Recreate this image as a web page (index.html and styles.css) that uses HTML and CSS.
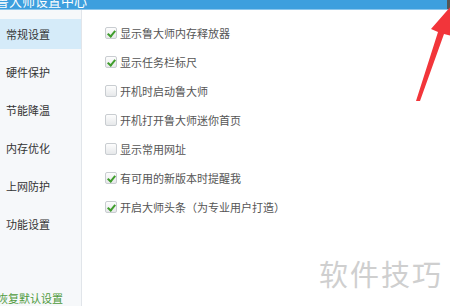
FILE: index.html
```html
<!DOCTYPE html>
<html lang="zh-CN">
<head>
  <meta charset="UTF-8" />
  <title>鲁大师设置中心</title>
  <link rel="stylesheet" href="styles.css">
</head>
<body>
  <div class="window">
    <div class="title-bar">
      <span class="title">鲁大师设置中心</span>
      <span class="close-edge"></span>
    </div>
    <div class="main">
      <div class="sidebar">
        <ul class="nav">
          <li class="active">常规设置</li>
          <li>硬件保护</li>
          <li>节能降温</li>
          <li>内存优化</li>
          <li>上网防护</li>
          <li>功能设置</li>
        </ul>
        <a class="reset">恢复默认设置</a>
      </div>
      <div class="content">
        <label class="option"><span class="box checked"></span>显示鲁大师内存释放器</label>
        <label class="option"><span class="box checked"></span>显示任务栏标尺</label>
        <label class="option"><span class="box"></span>开机时启动鲁大师</label>
        <label class="option"><span class="box"></span>开机打开鲁大师迷你首页</label>
        <label class="option"><span class="box"></span>显示常用网址</label>
        <label class="option"><span class="box checked"></span>有可用的新版本时提醒我</label>
        <label class="option"><span class="box checked"></span>开启大师头条（为专业用户打造）</label>
        <div class="watermark">软件技巧</div>
      </div>
    </div>
    <svg class="arrow" width="450" height="306" viewBox="0 0 450 306">
      <polygon points="416,101 420,101 444,34 452,36 451,6 431,29 438,32" fill="#f2353a"/>
    </svg>
  </div>
</body>
</html>
```

FILE: styles.css
```css
* {
  box-sizing: border-box;
}

body {
  margin: 0;
  font-family: "Noto Sans CJK SC", "Noto Sans", sans-serif;
  background: #fff;
  overflow: hidden;
}

.window {
  width: 450px;
  height: 306px;
  display: flex;
  flex-direction: column;
  position: relative;
  overflow: hidden;
}

.title-bar {
  height: 10px;
  background: #3d9fde;
  border-bottom: 1px solid #8cc6ec;
  overflow: hidden;
  display: flex;
  justify-content: space-between;
}

.title {
  color: #fff;
  font-size: 13px;
  line-height: 13px;
  margin-top: -6px;
  margin-left: -4px;
}

.close-edge {
  width: 3px;
  height: 10px;
  background: #555;
}

.main {
  flex: 1;
  display: flex;
}

.sidebar {
  width: 82px;
  background: #f6f8fa;
  border-right: 1px solid #e1e5ea;
  display: flex;
  flex-direction: column;
  justify-content: space-between;
}

.nav {
  list-style: none;
  margin: 0;
  padding: 9px 0 0;
  display: flex;
  flex-direction: column;
  gap: 8px;
}

.nav li {
  height: 30px;
  line-height: 30px;
  padding-left: 6px;
  font-size: 11px;
  color: #333;
}

.nav li.active {
  background: #d5ebf9;
}

.reset {
  font-size: 11px;
  color: #4f9a3c;
  margin-left: -3px;
  margin-bottom: 1px;
  line-height: 14px;
  white-space: nowrap;
}

.content {
  flex: 1;
  padding: 8px 0 0 23px;
  display: flex;
  flex-direction: column;
  position: relative;
}

.option {
  height: 29px;
  display: flex;
  align-items: center;
  gap: 3px;
  font-size: 11px;
  color: #555;
  white-space: nowrap;
}

.box {
  width: 12px;
  height: 12px;
  border: 1px solid #c9cdd1;
  border-radius: 2px;
  background: linear-gradient(#fdfdfd, #e6e8ea);
  position: relative;
  flex: none;
}

.box.checked::after {
  content: "";
  position: absolute;
  left: 3px;
  top: 1px;
  width: 3px;
  height: 6px;
  border: solid #3f9d2c;
  border-width: 0 2px 2px 0;
  transform: rotate(40deg);
}

.watermark {
  position: absolute;
  left: 237px;
  top: 242px;
  font-size: 29px;
  color: #cfcfcf;
  letter-spacing: 2px;
  white-space: nowrap;
}

.arrow {
  position: absolute;
  left: 0;
  top: 0;
  pointer-events: none;
}
```
